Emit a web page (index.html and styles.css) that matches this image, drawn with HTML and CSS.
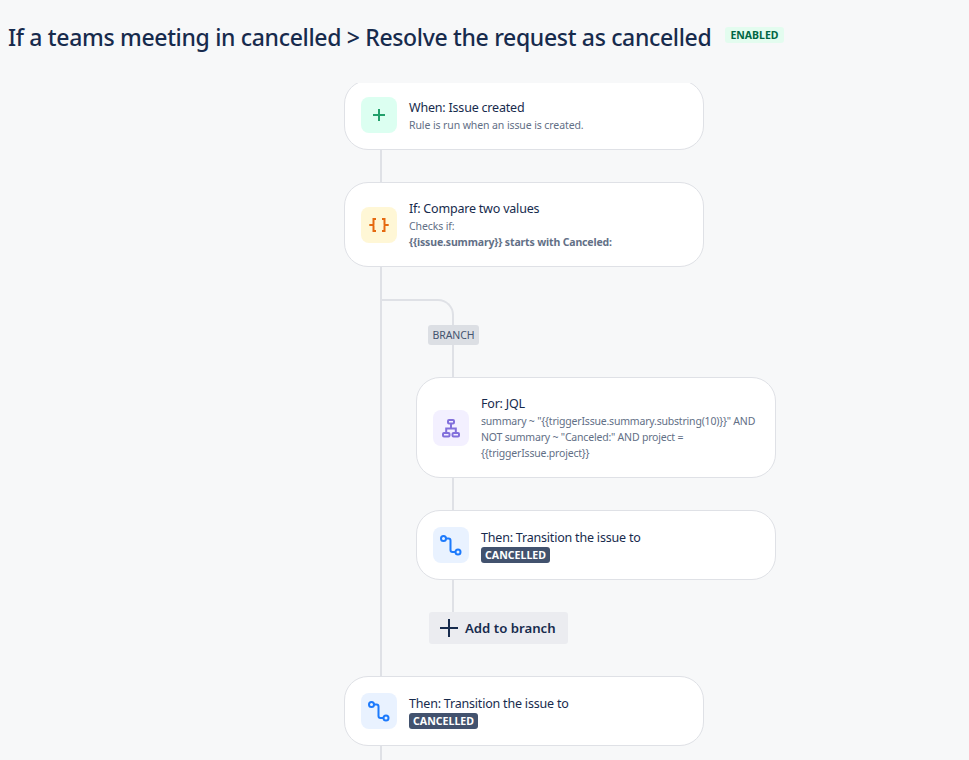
FILE: index.html

```html
<!DOCTYPE html>
<html lang="en">
<head>
  <meta charset="UTF-8" />
  <title>Rule details</title>
  <link rel="stylesheet" href="styles.css">
</head>
<body>
  <header class="rule-head">
    <h1>If a teams meeting in cancelled &gt; Resolve the request as cancelled</h1>
    <span class="status">ENABLED</span>
  </header>

  <main class="canvas">
    <div class="flow">
      <div class="card">
        <div class="icon icon-green">
          <svg width="36" height="36" viewBox="0 0 36 36"><path d="M18 12v12M12 18h12" stroke="#22A06B" stroke-width="2" fill="none"/></svg>
        </div>
        <div class="text">
          <div class="title">When: Issue created</div>
          <div class="sub">Rule is run when an issue is created.</div>
        </div>
      </div>
      <div class="line"></div>
      <div class="card">
        <div class="icon icon-yellow">
          <svg width="36" height="36" viewBox="0 0 36 36"><path d="M15 12h-2.500v5.200l-1 .8h-3.200M11.500 18l1 .8v5.200h2.500M21 12h2.500v5.200l1 .8h3.200M24.500 18l-1 .8v5.200h-2.500" stroke="#E56910" stroke-width="2" fill="none"/></svg>
        </div>
        <div class="text">
          <div class="title">If: Compare two values</div>
          <div class="sub">Checks if:</div>
          <div class="sub sub-bold">{{issue.summary}} starts with Canceled:</div>
        </div>
      </div>

      <section class="branch">
        <div class="elbow"></div>
        <span class="branch-tag">BRANCH</span>
        <div class="line line-branch"></div>
        <div class="card card-branch">
          <div class="icon icon-purple">
            <svg width="36" height="36" viewBox="0 0 36 36"><g stroke="#8270DB" stroke-width="2" fill="none"><rect x="15" y="10" width="6" height="3.500" rx="1"/><rect x="10" y="23" width="6.500" height="3.500" rx="1"/><rect x="19.500" y="23" width="6.500" height="3.500" rx="1"/><path d="M18 13.500v5M13.200 23v-4.500h9.600v4.500"/></g></svg>
          </div>
          <div class="text">
            <div class="title">For: JQL</div>
            <div class="sub sub-tight">summary ~ "{{triggerIssue.summary.substring(10)}}" AND NOT summary ~ "Canceled:" AND project = {{triggerIssue.project}}</div>
          </div>
        </div>
        <div class="line line-branch"></div>
        <div class="card card-branch">
          <div class="icon icon-blue">
            <svg width="36" height="36" viewBox="0 0 36 36"><g stroke="#1D7AFC" stroke-width="2" fill="none"><circle cx="10.500" cy="11.500" r="2.500"/><circle cx="25" cy="25" r="2.500"/><path d="M13 11.500h2.500a2 2 0 0 1 2 2v9.500a2 2 0 0 0 2 2h3"/></g></svg>
          </div>
          <div class="text">
            <div class="title">Then: Transition the issue to</div>
            <span class="lozenge">CANCELLED</span>
          </div>
        </div>
        <div class="line line-branch"></div>
        <button class="add-btn">
          <svg width="24" height="24" viewBox="0 0 24 24"><path d="M12 3v18M3 12h18" stroke="#172B4D" stroke-width="2" fill="none"/></svg>
          Add to branch
        </button>
      </section>

      <div class="card">
        <div class="icon icon-blue">
          <svg width="36" height="36" viewBox="0 0 36 36"><g stroke="#1D7AFC" stroke-width="2" fill="none"><circle cx="10.500" cy="11.500" r="2.500"/><circle cx="25" cy="25" r="2.500"/><path d="M13 11.500h2.500a2 2 0 0 1 2 2v9.500a2 2 0 0 0 2 2h3"/></g></svg>
        </div>
        <div class="text">
          <div class="title">Then: Transition the issue to</div>
          <span class="lozenge">CANCELLED</span>
        </div>
      </div>
      <div class="line"></div>
    </div>
  </main>
</body>
</html>
```

FILE: styles.css

```css
html, body { height: 100%; }
body {
  margin: 0;
  background: #f7f8f9;
  color: #172b4d;
  font-family: 'Noto Sans', sans-serif;
  overflow: hidden;
}
.rule-head {
  display: flex;
  align-items: center;
  height: 83px;
  padding: 0 0 10px 8px;
  box-sizing: border-box;
}
.rule-head h1 {
  margin: 0;
  font-size: 23px;
  font-weight: 500;
  letter-spacing: -0.33px;
}
.status {
  margin: 0 0 4px 14px;
  padding: 0 5px;
  height: 16px;
  line-height: 16px;
  border-radius: 3px;
  background: #e3fcef;
  color: #006644;
  font-size: 10.500px;
  font-weight: 700;
}
.canvas {
  height: 677px;
  overflow: hidden;
}
.flow {
  width: 360px;
  margin: -3px 0 0 344px;
}
.card {
  display: flex;
  align-items: center;
  gap: 12px;
  width: 360px;
  box-sizing: border-box;
  padding: 16px;
  background: white;
  border: 1px solid #dfe1e6;
  border-radius: 24px;
}
.icon {
  flex: none;
  width: 36px;
  height: 36px;
  border-radius: 8px;
}
.icon svg { display: block; }
.icon-green { background: #dcfff1; }
.icon-yellow { background: #fff7d6; }
.icon-purple { background: #f3f0ff; }
.icon-blue { background: #e9f2ff; }
.text { min-width: 0; }
.title {
  font-size: 12.500px;
  line-height: 19px;
  letter-spacing: -0.2px;
}
.sub {
  font-size: 10.500px;
  line-height: 16px;
  letter-spacing: -0.1px;
  color: #626f86;
}
.sub-bold {
  font-weight: 700;
  letter-spacing: -0.15px;
}
.sub-tight { letter-spacing: -0.2px; }
.line {
  width: 2px;
  height: 32px;
  margin-left: 36px;
  background: #dfe1e6;
}
.branch {
  margin-left: 36px;
  padding: 32px 0 32px 0;
  border-left: 2px solid #dfe1e6;
}
.elbow {
  width: 72px;
  height: 26px;
  box-sizing: border-box;
  border-top: 2px solid #dfe1e6;
  border-right: 2px solid #dfe1e6;
  border-top-right-radius: 16px;
}
.branch-tag {
  display: block;
  width: 51px;
  height: 20px;
  margin-left: 46px;
  box-sizing: border-box;
  line-height: 20px;
  text-align: center;
  border-radius: 3px;
  background: #dcdfe4;
  color: #44546f;
  font-size: 10.500px;
  letter-spacing: -0.1px;
}
.line-branch { margin-left: 70px; }
.card-branch { margin-left: 34px; }
.lozenge {
  display: block;
  width: fit-content;
  height: 16px;
  line-height: 16px;
  padding: 0 4px;
  border-radius: 3px;
  background: #42526e;
  color: white;
  font-size: 10.600px;
  font-weight: 700;
}
.add-btn {
  display: flex;
  align-items: center;
  gap: 4px;
  height: 32px;
  margin-left: 47px;
  padding: 0 12px 0 8px;
  border: none;
  border-radius: 3px;
  background: #ebecf0;
  color: #172b4d;
  font-family: inherit;
  font-size: 13.200px;
  font-weight: 600;
}
```
